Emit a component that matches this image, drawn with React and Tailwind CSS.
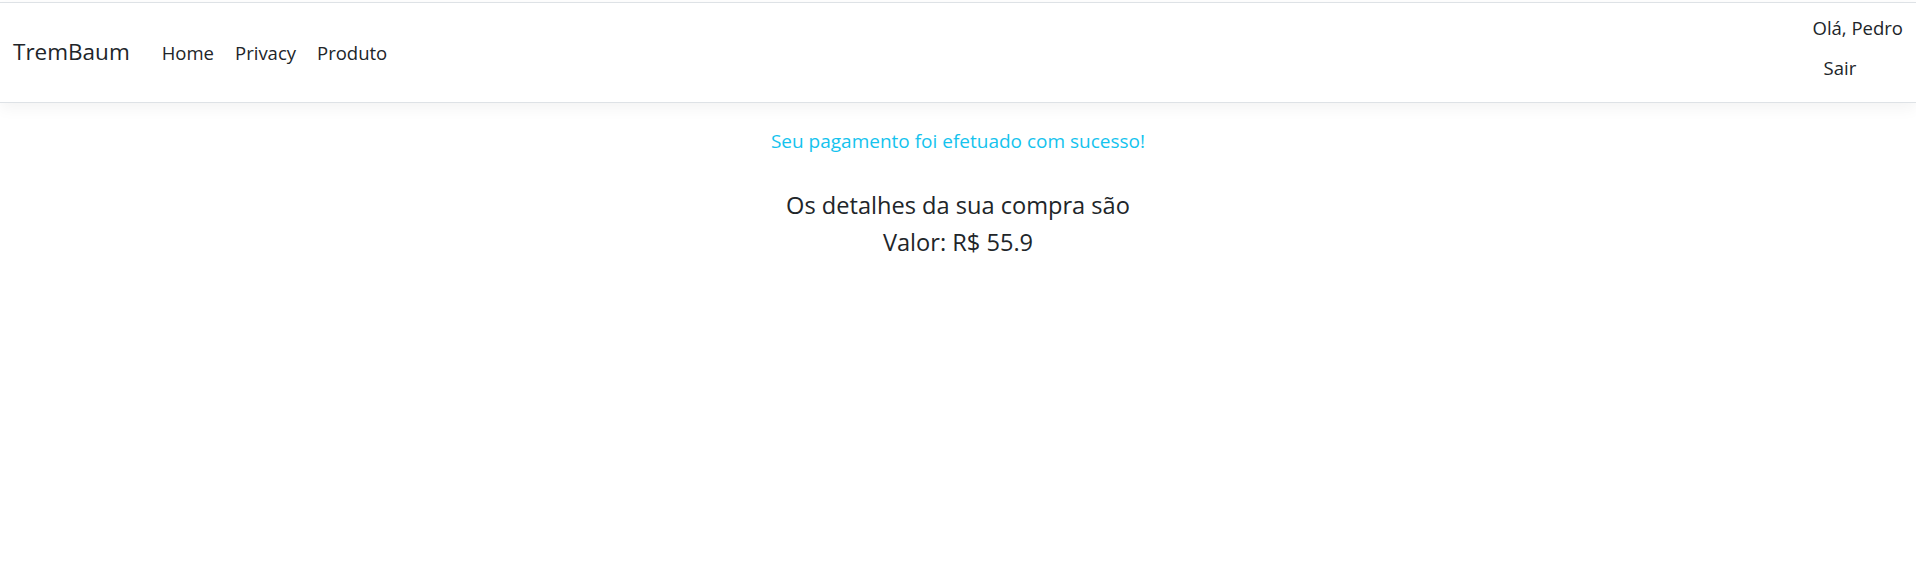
export default function App() {
  return (
    <div className="min-h-screen bg-white text-[#212529]" style={{ fontFamily: '"Open Sans", "Noto Sans", sans-serif' }}>
      <div className="h-[2px]" />
      <header className="border-t border-b border-[#dee2e6] bg-white shadow-[0_5px_15px_rgba(0,0,0,0.05)]">
        <nav className="flex items-center h-[99px] pl-[13px] pr-[13px]">
          <a className="text-[22.5px] leading-none mr-[32px]">TremBaum</a>
          <ul className="flex items-center gap-[21px] text-[18.5px]">
            <li>Home</li>
            <li>Privacy</li>
            <li>Produto</li>
          </ul>
          <div className="ml-auto flex flex-col items-start text-[18.5px] leading-[40px] mt-[-36px] mb-[-27px]">
            <span>Olá, Pedro</span>
            <span className="pl-[11px]">Sair</span>
          </div>
        </nav>
      </header>
      <main className="flex flex-col items-center pt-[24px]">
        <p className="text-[#14c3ee] text-[19px] leading-[28px]">Seu pagamento foi efetuado com sucesso!</p>
        <h5 className="mt-[36px] text-[23.6px] leading-[28px]">Os detalhes da sua compra são</h5>
        <h5 className="mt-[9px] text-[23.6px] leading-[28px]">Valor: R$ 55.9</h5>
      </main>
    </div>
  );
}
